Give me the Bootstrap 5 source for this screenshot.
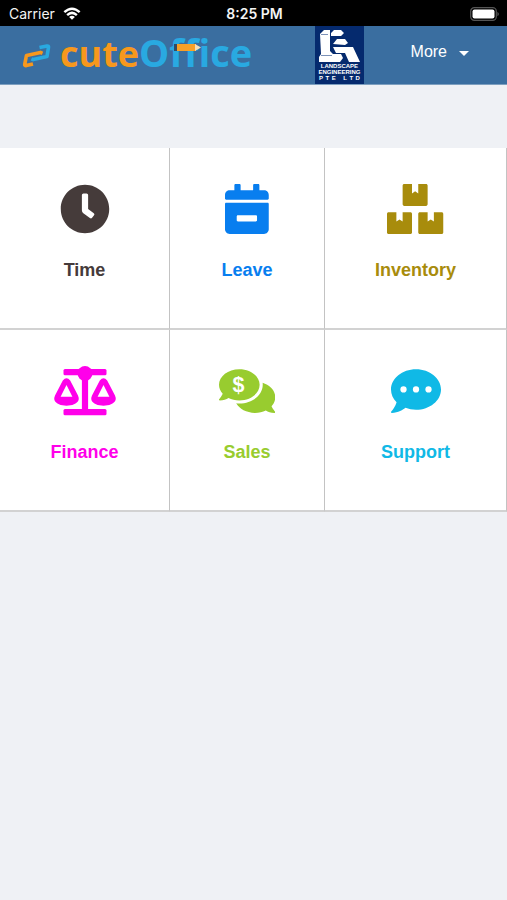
<!DOCTYPE html>
<html lang="en">
<head>
<meta charset="utf-8">
<meta name="viewport" content="width=device-width, initial-scale=1">
<title>cuteOffice</title>
<link href="https://cdn.jsdelivr.net/npm/bootstrap@5.3.0/dist/css/bootstrap.min.css" rel="stylesheet">
<style>
body{background:#eff1f5;font-family:"Liberation Sans",Arial,sans-serif}
.status-bar{height:26px;background:#000;color:#f4f4f4;font:400 14px/24px Inter,sans-serif;display:grid;grid-template-columns:1fr auto 1fr;padding:2px 7px 0 9px}
.status-bar time{font-weight:600}
.top-bar{height:59px;background:#3a6ea0;border-bottom:1px solid #7d9fbf;padding:0 38px 0 22px}
.brand-link{color:#29a9e1;gap:9px;padding-bottom:4px}
.brand-name{font:700 38px/52px "Open Sans","Noto Sans",sans-serif}
.brand-name b{color:#f7981d;font-weight:700;font-size:36px}
.pencil{position:absolute;left:152px;top:17px}
.firm{width:49px;height:58px;background:#052a6e;color:#fff;font:700 6px/6px "Liberation Sans",sans-serif;padding-top:3px;margin-left:16px}
.firm-lines{width:41px;text-align:center;white-space:nowrap}
.more-btn{color:#fff;font-size:16px;line-height:20px;gap:12px}
.more-btn svg{margin-top:3px}
.tiles{margin-top:63px;display:grid;grid-template-columns:170fr 155fr 182fr;background:#fff}
.tile{height:182px;padding-top:36px;border-right:1px solid #c3c3c3;border-bottom:2px solid #d2d2d2;font-size:18px;line-height:24px;font-weight:700;gap:24px;color:var(--tone)}
.tile svg{height:50px;width:auto;fill:currentColor}
.time{--tone:#453b3a}.leave{--tone:#087eef}.stock{--tone:#a88c0c}.finance{--tone:#ff00ea}.sales{--tone:#98cc2f}.support{--tone:#10b9e6}
</style>
<script src="https://cdn.jsdelivr.net/npm/bootstrap@5.3.0/dist/js/bootstrap.bundle.min.js"></script>
</head>
<body>
<div class="status-bar">
  <div class="d-flex align-items-center gap-2"><span>Carrier</span>
    <svg width="18" height="14" viewBox="0 0 20 15" fill="none" stroke="#fff" stroke-width="2.7" aria-hidden="true"><path d="M1.500 5.500Q10-2.200 18.500 5.500M4.600 8.700Q10 3.800 15.400 8.700"/><path d="M6.800 10.800Q10 8.200 13.200 10.800L10 14Z" fill="#fff" stroke="none"/></svg>
  </div>
  <time>8:25 PM</time>
  <div class="d-flex align-items-center justify-content-end">
    <svg width="30" height="14" viewBox="0 0 30 14" aria-hidden="true"><rect x=".7" y=".7" width="25.600" height="12.600" rx="3.600" fill="none" stroke="#555" stroke-width="1.200"/><rect x="2.500" y="2.500" width="22" height="9" rx="2" fill="#fff"/><path d="M27.500 4.700Q30 7 27.500 9.300Z" fill="#666"/></svg>
  </div>
</div>
<header class="top-bar d-flex justify-content-between">
  <a href="#" class="brand-link d-flex align-items-center text-decoration-none position-relative">
    <svg class="mt-1" width="29" height="26" viewBox="0 0 29 26" fill="none" stroke-width="3.600" stroke-linejoin="round" aria-hidden="true"><path stroke="#f7981d" d="M11 22 4.200 23.600Q2.500 23.800 2.700 22.400L4.500 13.400 18.500 10.400 20.500 11.300"/><path stroke="#29a9e1" d="M17.500 5.600 25 4Q26.800 3.800 26.500 5.200L25 14.400 11.200 17.600 9.400 16.800"/></svg>
    <span class="brand-name"><b>cute</b>Office</span>
    <svg class="pencil" width="27" height="9" viewBox="0 0 27 9" aria-hidden="true"><path fill="#334a63" d="M0 1h3v7H0z"/><path fill="#f7a027" d="M3 1h19v7H3z"/><path fill="#f5ddb5" d="M21 1l6 3.500L21 8z"/></svg>
  </a>
  <div class="firm d-flex flex-column align-items-center">
    <svg width="41" height="34" viewBox="0 0 41 34" fill="#fff" aria-hidden="true"><path d="M1 5 5 1H11V22L14 25H22L24 29 21 33H0V28L2 25Z"/><path d="M12 4 15 1H22L25 4 22 7H12ZM14 15 18 10H26L29 14 26 16ZM14 18H34L41 33H30L26 24H17Z"/><path fill="none" stroke="#7d92b8" d="M2 5.500H9M2 26.500H13"/></svg>
    <div class="firm-lines">LANDSCAPE</div><div class="firm-lines d-flex justify-content-center">ENGINEERING</div><div class="firm-lines d-flex justify-content-between"><span>P</span><span>T</span><span>E</span><span></span><span></span><span>L</span><span>T</span><span>D</span></div>
  </div>
  <button type="button" class="more-btn btn p-0 border-0 d-flex align-items-center align-self-start mt-3" data-bs-toggle="dropdown" aria-expanded="false">More<svg width="10" height="5" viewBox="0 0 10 5" fill="#fff" aria-hidden="true"><path d="M0 0H10L5 5Z"/></svg></button>
</header>
<main class="tiles">
  <a href="#" class="tile time d-flex flex-column align-items-center text-decoration-none">
    <svg viewBox="0 0 512 512" aria-hidden="true"><path d="M256 8C119 8 8 119 8 256s111 248 248 248 248-111 248-248S393 8 256 8zm92.500 313-20 25a16 16 0 0 1-22.500 2.500l-67-49.700a40 40 0 0 1-15-31.200V112a16 16 0 0 1 16-16h32a16 16 0 0 1 16 16v144l58 42.500a16 16 0 0 1 2.500 22.500z"/></svg>Time</a>
  <a href="#" class="tile leave d-flex flex-column align-items-center text-decoration-none">
    <svg viewBox="0 0 448 512" aria-hidden="true"><path d="M436 160H12c-6.600 0-12-5.400-12-12v-36c0-26.500 21.500-48 48-48h48V12c0-6.600 5.400-12 12-12h40c6.600 0 12 5.400 12 12v52h128V12c0-6.600 5.400-12 12-12h40c6.600 0 12 5.400 12 12v52h48c26.500 0 48 21.500 48 48v36c0 6.600-5.400 12-12 12zM12 192h424c6.600 0 12 5.400 12 12v260c0 26.500-21.500 48-48 48H48c-26.500 0-48-21.500-48-48V204c0-6.600 5.400-12 12-12zm304 192c6.600 0 12-5.400 12-12v-40c0-6.600-5.400-12-12-12H132c-6.600 0-12 5.400-12 12v40c0 6.600 5.400 12 12 12h184z"/></svg>Leave</a>
  <a href="#" class="tile stock d-flex flex-column align-items-center text-decoration-none">
    <svg viewBox="0 0 576 512" aria-hidden="true"><path d="M560 288h-80v96l-32-21.300-32 21.300v-96h-80c-8.800 0-16 7.200-16 16v192c0 8.800 7.200 16 16 16h224c8.800 0 16-7.200 16-16V304c0-8.800-7.200-16-16-16zm-384-64h224c8.800 0 16-7.200 16-16V16c0-8.800-7.200-16-16-16h-80v96l-32-21.300L256 96V0h-80c-8.800 0-16 7.200-16 16v192c0 8.800 7.200 16 16 16zm64 64h-80v96l-32-21.300L96 384v-96H16c-8.800 0-16 7.200-16 16v192c0 8.800 7.200 16 16 16h224c8.800 0 16-7.200 16-16V304c0-8.800-7.200-16-16-16z"/></svg>Inventory</a>
  <a href="#" class="tile finance d-flex flex-column align-items-center text-decoration-none">
    <svg viewBox="0 0 62 50" aria-hidden="true"><rect x="9.500" y="3" width="43" height="6.200" rx="1.500"/><rect x="9.500" y="43" width="43" height="6.300" rx="1.500"/><path d="M27.900 8h6.200v37h-6.200z"/><circle cx="31" cy="7.500" r="7.500"/><path id="pan" fill-rule="evenodd" d="M8.800 14.400Q12.500 10.200 16.200 14.400L24 29.500Q25 31.500 24.600 34C23 38 18 39.700 12.500 39.700S2 38 .4 34Q0 31.500 1 29.500ZM12.500 19 6.600 30.800H18.400Z"/><use href="#pan" x="37"/></svg>Finance</a>
  <a href="#" class="tile sales d-flex flex-column align-items-center text-decoration-none">
    <svg viewBox="0 0 576 512" aria-hidden="true"><path d="M416 192c0-88.400-93.100-160-208-160S0 103.600 0 192c0 34.300 14.100 65.900 38 92-13.400 30.200-35.500 54.200-35.800 54.500-2.200 2.300-2.800 5.700-1.500 8.700S4.800 352 8 352c36.600 0 66.900-12.300 88.700-25 32.200 15.700 70.300 25 111.300 25 114.900 0 208-71.600 208-160zm122 220c23.900-26 38-57.700 38-92 0-66.900-53.500-124.200-129.300-148.100.9 6.600 1.300 13.300 1.300 20.100 0 105.900-107.700 192-240 192-10.800 0-21.300-.8-31.700-1.900C207.800 439.600 281.800 480 368 480c41 0 79.100-9.200 111.300-25 21.800 12.700 52.100 25 88.700 25 3.200 0 6.100-1.900 7.300-4.800 1.300-2.900.7-6.300-1.500-8.700-.3-.3-22.400-24.200-35.800-54.500z"/><text x="200" y="268" font-size="220" text-anchor="middle" fill="#fff">$</text></svg>Sales</a>
  <a href="#" class="tile support d-flex flex-column align-items-center text-decoration-none">
    <svg viewBox="0 0 512 512" aria-hidden="true"><path d="M256 32C114.600 32 0 125.100 0 240c0 49.600 21.400 95 57 130.700C44.500 421.100 2.700 466 2.200 466.500c-2.200 2.300-2.800 5.700-1.500 8.700S4.800 480 8 480c66.300 0 116-31.800 140.600-51.400 32.700 12.300 69 19.400 107.400 19.400 141.400 0 256-93.100 256-208S397.400 32 256 32z"/><g fill="#fff"><circle cx="128" cy="240" r="32"/><circle cx="256" cy="240" r="32"/><circle cx="384" cy="240" r="32"/></g></svg>Support</a>
</main>
</body>
</html>
